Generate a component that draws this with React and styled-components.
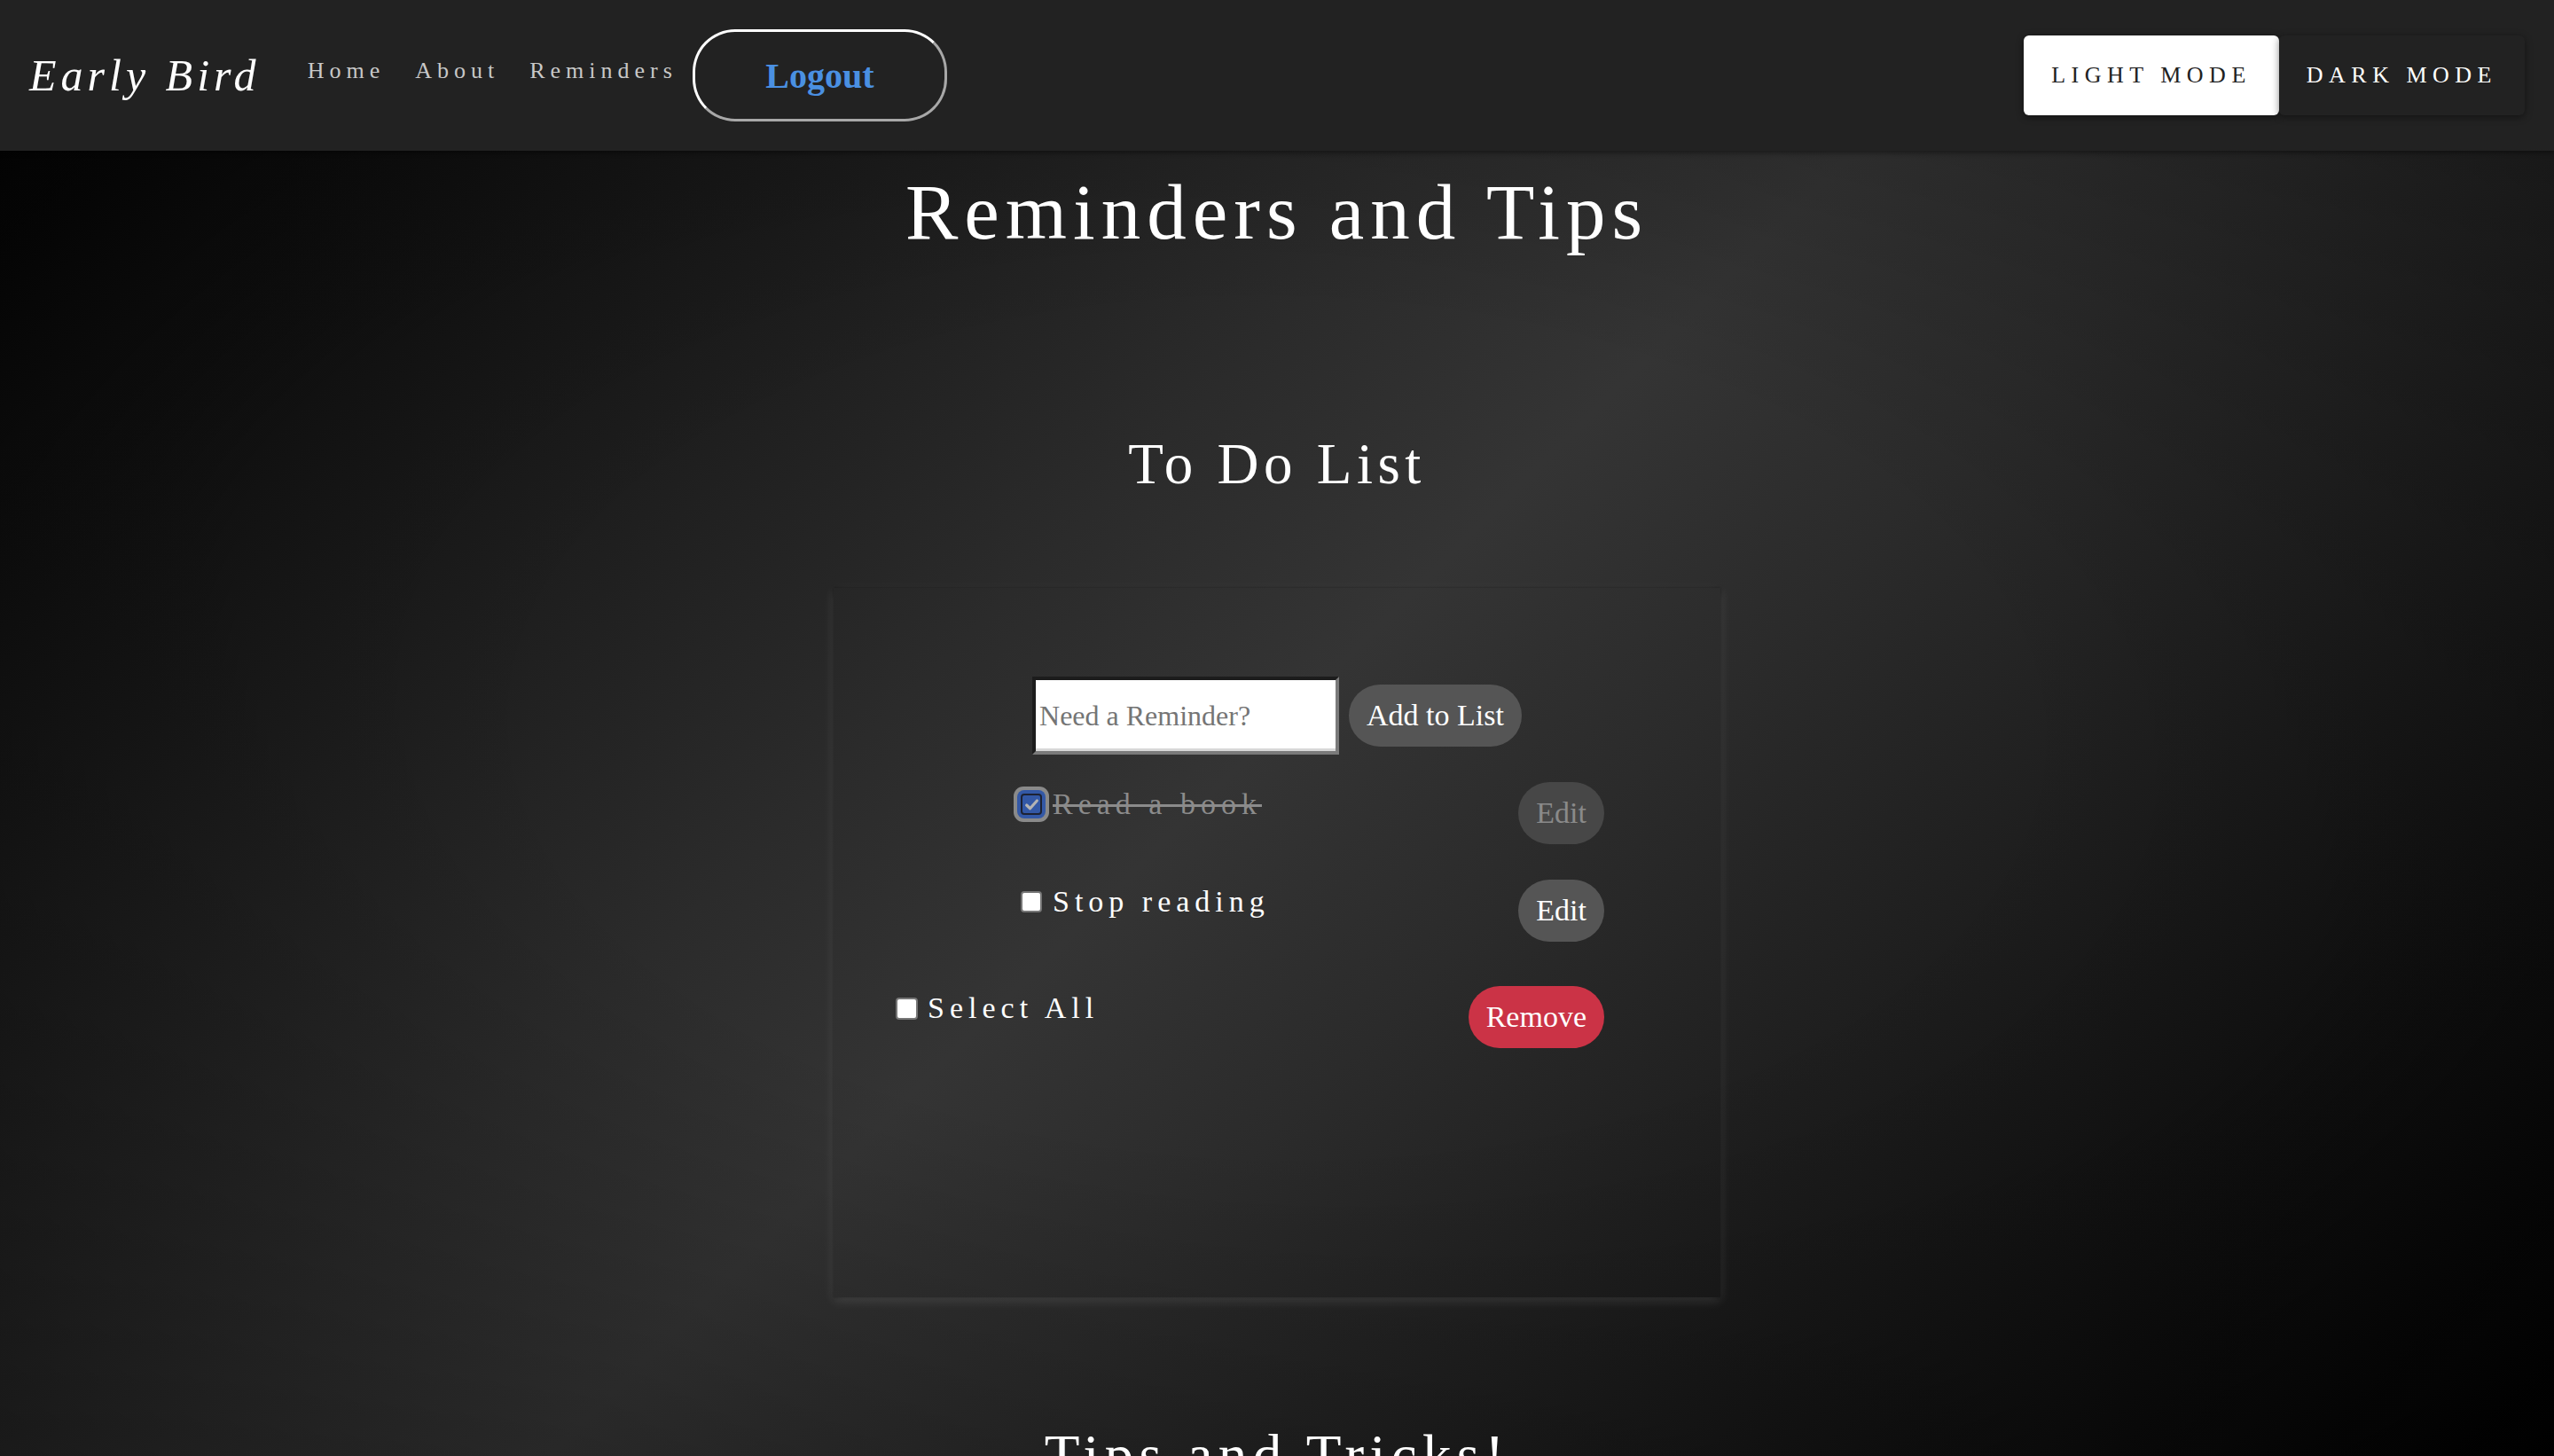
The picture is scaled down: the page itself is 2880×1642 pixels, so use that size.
import React from 'react';
import styled, { createGlobalStyle } from 'styled-components';

const GlobalStyle = createGlobalStyle`
  html, body {
    margin: 0;
    padding: 0;
  }
  body {
    min-height: 100vh;
    background:
      radial-gradient(ellipse at center, rgba(0, 0, 0, 0) 40%, rgba(0, 0, 0, 0.35) 100%) fixed,
      linear-gradient(135deg, #000 0%, #2b2b2b 40%, #343434 50%, #2b2b2b 60%, #000 100%) fixed;
    font-family: "Liberation Serif", "Times New Roman", serif;
    color: #fff;
  }
  * {
    box-sizing: border-box;
  }
`;

const Nav = styled.nav`
  display: flex;
  align-items: center;
  height: 170px;
  padding: 0 33px;
  background: #222;
  box-shadow: 0 2px 6px rgba(0, 0, 0, 0.45);
`;

const Logo = styled.a`
  font-size: 50px;
  font-style: italic;
  letter-spacing: 5px;
  color: #fff;
  margin-right: 53px;
  text-decoration: none;
`;

const Links = styled.ul`
  display: flex;
  gap: 34px;
  list-style: none;
  margin: 0 0 10px;
  padding: 0;

  a {
    font-size: 26px;
    letter-spacing: 6px;
    color: #c8c8c8;
    text-decoration: none;
  }
`;

const LogoutButton = styled.button`
  margin-left: 17px;
  width: 287px;
  height: 104px;
  border: 3px solid;
  border-color: #fff #a8a8a8 #a8a8a8 #fff;
  border-radius: 48px;
  background: transparent;
  color: #4a90e2;
  font-family: inherit;
  font-size: 40px;
  font-weight: bold;
`;

const ModeGroup = styled.div`
  display: flex;
  margin-left: auto;
`;

const ModeButton = styled.button`
  height: 90px;
  padding: 0 31px;
  border: none;
  border-radius: 6px;
  background: ${(p) => (p.$light ? '#fff' : '#222')};
  color: ${(p) => (p.$light ? '#222' : '#fff')};
  font-family: inherit;
  font-size: 26px;
  letter-spacing: 6.5px;
  text-transform: uppercase;
  box-shadow: 0 2px 8px rgba(0, 0, 0, 0.45);
`;

const Main = styled.main`
  text-align: center;
`;

const Title = styled.h1`
  margin: 18px 0 0;
  font-size: 89px;
  line-height: 102px;
  font-weight: normal;
  letter-spacing: 7px;
`;

const Heading = styled.h2`
  margin: ${(p) => p.$top}px 0 0;
  font-size: 65px;
  line-height: 75px;
  font-weight: normal;
  letter-spacing: ${(p) => p.$spacing || 5.5}px;
`;

const Card = styled.section`
  width: 1000px;
  height: 800px;
  margin: 102px auto 0;
  padding-top: 100px;
  box-shadow: 0 4px 12px rgba(255, 255, 255, 0.12), 0 0 3px rgba(0, 0, 0, 0.55);
  text-align: left;
`;

const Form = styled.form`
  display: flex;
  justify-content: center;
  align-items: center;
  gap: 11px;
`;

const Input = styled.input`
  width: 346px;
  height: 88px;
  padding: 0 4px;
  border: 4px solid;
  border-color: #1c1c1c #7a7a7a #7a7a7a #1c1c1c;
  box-shadow: inset 0 -3px 0 #d8d8d8;
  background: #fff;
  font-family: inherit;
  font-size: 32px;
  outline: none;

  &::placeholder {
    color: #757575;
  }
`;

const Pill = styled.button`
  height: 70px;
  padding: 0 20px;
  border: none;
  border-radius: 35px;
  background: ${(p) => p.$bg || '#555'};
  color: ${(p) => p.$color || '#fff'};
  font-family: inherit;
  font-size: 34px;
`;

const List = styled.ul`
  display: flex;
  flex-direction: column;
  gap: 40px;
  list-style: none;
  margin: 31px 131px 0 211px;
  padding: 0;
`;

const Row = styled.li`
  display: flex;
  justify-content: space-between;
  align-items: center;
  height: 70px;
`;

const FooterRow = styled.div`
  display: flex;
  justify-content: space-between;
  align-items: center;
  height: 70px;
  margin: 50px 131px 0 70px;
`;

const Label = styled.label`
  display: flex;
  align-items: center;
  gap: ${(p) => p.$gap || 12}px;
  margin-bottom: 20px;
  font-size: 34px;
  letter-spacing: 6px;
  color: ${(p) => (p.$done ? '#8b8b8b' : '#fff')};
  text-decoration: ${(p) => (p.$done ? 'line-through' : 'none')};
  text-decoration-color: #8b8b8b;
  text-decoration-thickness: 3px;

  input {
    position: absolute;
    opacity: 0;
    width: 0;
    height: 0;
  }
`;

const Box = styled.span`
  display: flex;
  align-items: center;
  justify-content: center;
  width: ${(p) => p.$size || 24}px;
  height: ${(p) => p.$size || 24}px;
  flex-shrink: 0;
  border-radius: 4px;
  background: ${(p) => (p.$checked ? '#3358a6' : '#fff')};
  border: ${(p) => (p.$checked ? '2px solid #1d2233' : '2px solid #767676')};
  box-shadow: ${(p) =>
    p.$checked ? '0 0 0 4px #3358a6, 0 0 0 8px #8a8a8a' : 'none'};
`;

function Check({ checked, size }) {
  return (
    <Box $checked={checked} $size={size}>
      <input type="checkbox" defaultChecked={checked} />
      {checked && (
        <svg width="17" height="17" viewBox="0 0 16 16">
          <path d="M2.5 8.5 L6.2 12 L13.5 3.8" fill="none" stroke="#b4b4b4" strokeWidth="3" strokeLinecap="round" strokeLinejoin="round" />
        </svg>
      )}
    </Box>
  );
}

const todos = [
  { text: 'Read a book', done: true },
  { text: 'Stop reading', done: false },
];

export default function App() {
  return (
    <>
      <GlobalStyle />
      <Nav>
        <Logo href="#">Early Bird</Logo>
        <Links>
          <li><a href="#">Home</a></li>
          <li><a href="#">About</a></li>
          <li><a href="#">Reminders</a></li>
        </Links>
        <LogoutButton>Logout</LogoutButton>
        <ModeGroup>
          <ModeButton $light>Light Mode</ModeButton>
          <ModeButton>Dark Mode</ModeButton>
        </ModeGroup>
      </Nav>

      <Main>
        <Title>Reminders and Tips</Title>
        <Heading $top={196}>To Do List</Heading>

        <Card>
          <Form onSubmit={(e) => e.preventDefault()}>
            <Input placeholder="Need a Reminder?" />
            <Pill type="submit">Add to List</Pill>
          </Form>

          <List>
            {todos.map((t) => (
              <Row key={t.text}>
                <Label $done={t.done}>
                  <Check checked={t.done} />
                  {t.text}
                </Label>
                {t.done ? (
                  <Pill $bg="#474747" $color="#8a8a8a" disabled>Edit</Pill>
                ) : (
                  <Pill>Edit</Pill>
                )}
              </Row>
            ))}
          </List>

          <FooterRow>
            <Label $gap={11}>
              <Check size={25} />
              Select All
            </Label>
            <Pill $bg="#cb3346">Remove</Pill>
          </FooterRow>
        </Card>

        <Heading $top={141} $spacing={6.3}>Tips and Tricks!</Heading>
      </Main>
    </>
  );
}
